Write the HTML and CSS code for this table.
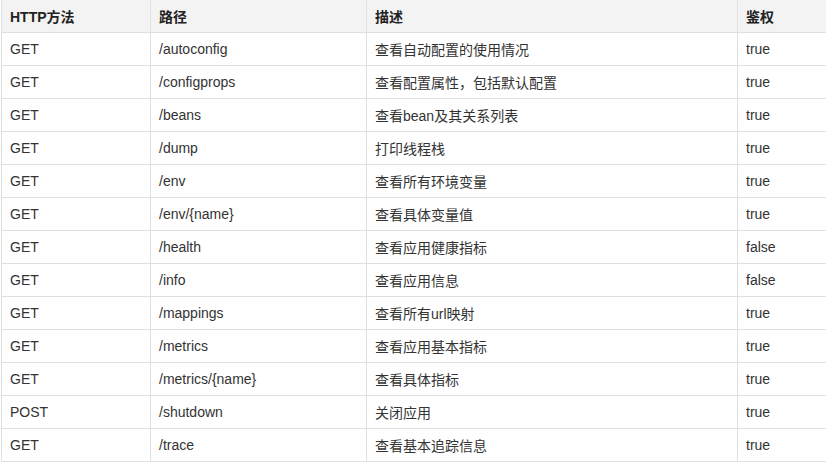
FILE: index.html
```html
<!DOCTYPE html>
<html>
<head>
<meta charset="utf-8">
<link rel="stylesheet" href="styles.css">
</head>
<body>
<table class="api">
<colgroup><col class="c1"><col class="c2"><col class="c3"><col class="c4"></colgroup>
<thead>
<tr><th>HTTP方法</th><th>路径</th><th>描述</th><th>鉴权</th></tr>
</thead>
<tbody>
<tr><td>GET</td><td>/autoconfig</td><td>查看自动配置的使用情况</td><td>true</td></tr>
<tr><td>GET</td><td>/configprops</td><td>查看配置属性，包括默认配置</td><td>true</td></tr>
<tr><td>GET</td><td>/beans</td><td>查看bean及其关系列表</td><td>true</td></tr>
<tr><td>GET</td><td>/dump</td><td>打印线程栈</td><td>true</td></tr>
<tr><td>GET</td><td>/env</td><td>查看所有环境变量</td><td>true</td></tr>
<tr><td>GET</td><td>/env/{name}</td><td>查看具体变量值</td><td>true</td></tr>
<tr><td>GET</td><td>/health</td><td>查看应用健康指标</td><td>false</td></tr>
<tr><td>GET</td><td>/info</td><td>查看应用信息</td><td>false</td></tr>
<tr><td>GET</td><td>/mappings</td><td>查看所有url映射</td><td>true</td></tr>
<tr><td>GET</td><td>/metrics</td><td>查看应用基本指标</td><td>true</td></tr>
<tr><td>GET</td><td>/metrics/{name}</td><td>查看具体指标</td><td>true</td></tr>
<tr><td>POST</td><td>/shutdown</td><td>关闭应用</td><td>true</td></tr>
<tr><td>GET</td><td>/trace</td><td>查看基本追踪信息</td><td>true</td></tr>
</tbody>
</table>
</body>
</html>
```
FILE: styles.css
```css
html, body {
  margin: 0;
  padding: 0;
  background: #fff;
}
.api {
  border-collapse: collapse;
  table-layout: fixed;
  width: 825px;
  margin-left: 1px;
  font-family: "Liberation Sans", Arial, "Noto Sans CJK SC", sans-serif;
  font-size: 14px;
  color: #333;
}
.c1 { width: 149px; }
.c2 { width: 216px; }
.c3 { width: 371px; }
.c4 { width: 89px; }
.api th, .api td {
  border: 1px solid #e0e0e0;
  padding: 0 8px;
  height: 32px;
  box-sizing: border-box;
  text-align: left;
  vertical-align: middle;
  white-space: nowrap;
}
.api th {
  height: 32px;
  border-top: none;
  background: #f3f3f3;
  font-weight: bold;
  color: #222;
}
.api td {
  height: 33px;
}
```
